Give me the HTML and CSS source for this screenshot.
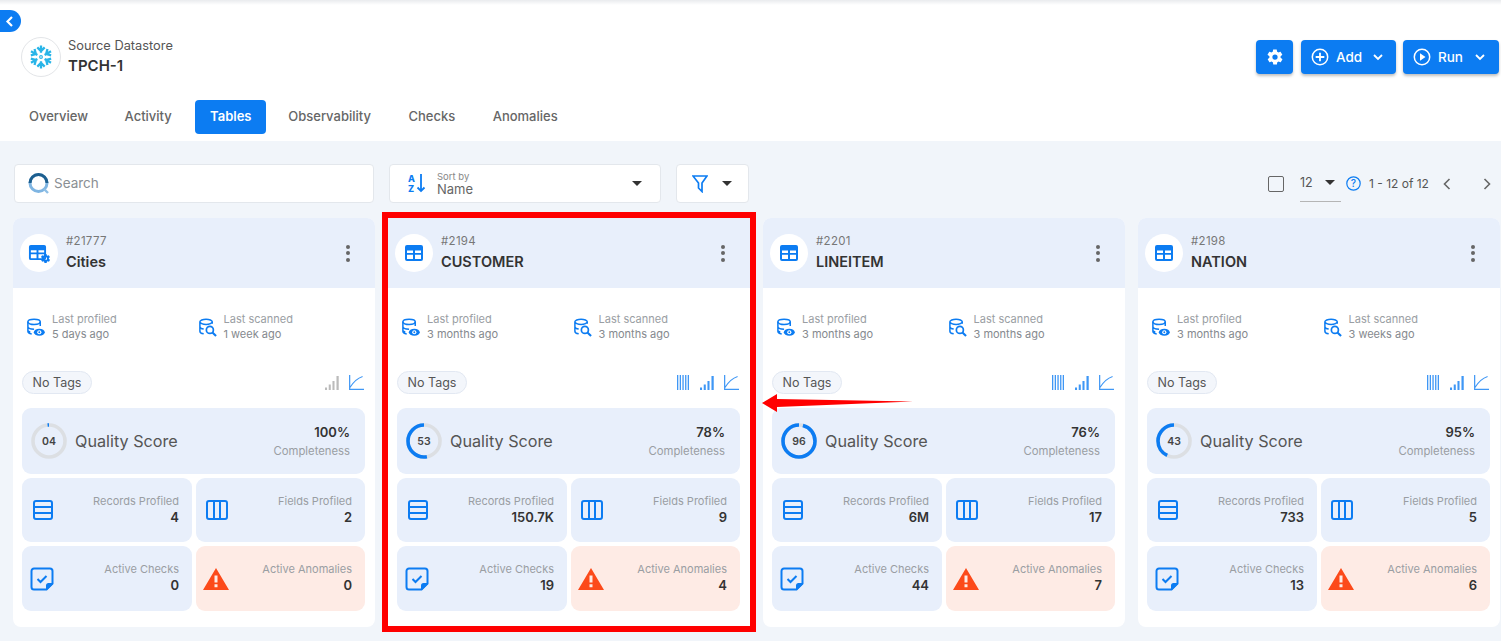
FILE: index.html
```html
<!DOCTYPE html>
<html lang="en">
<head>
  <meta charset="UTF-8">
  <meta name="viewport" content="width=device-width, initial-scale=1.0">
  <title>TPCH-1 Tables</title>
  <link rel="stylesheet" href="styles.css">
</head>
<body>

  <!-- icon sheet -->
  <svg class="sheet" xmlns="http://www.w3.org/2000/svg">
    <symbol id="i-gear" viewBox="0 0 24 24">
      <path fill="currentColor" d="M19.400 13c.1-.3.100-.7.100-1s0-.7-.1-1l2.100-1.600c.2-.2.200-.4.100-.6l-2-3.500c-.1-.2-.4-.3-.6-.2l-2.500 1c-.5-.4-1.100-.7-1.700-1l-.4-2.600c0-.3-.2-.5-.5-.5h-4c-.3 0-.5.200-.5.500l-.4 2.600c-.6.300-1.200.6-1.700 1l-2.500-1c-.2-.1-.5 0-.6.200l-2 3.500c-.1.200-.1.400.1.600L4.600 11c-.1.300-.1.700-.1 1s0 .7.100 1l-2.100 1.600c-.2.200-.2.400-.1.600l2 3.500c.1.200.4.300.6.200l2.500-1c.5.400 1.100.7 1.700 1l.4 2.600c0 .3.200.5.500.5h4c.3 0 .5-.2.500-.5l.4-2.600c.6-.3 1.200-.6 1.700-1l2.500 1c.2.100.5 0 .6-.2l2-3.500c.1-.2.100-.4-.1-.6zM12 15.500a3.500 3.500 0 1 1 0-7 3.500 3.500 0 0 1 0 7z"/>
    </symbol>
    <symbol id="i-table" viewBox="0 0 20 20">
      <path fill="currentColor" fill-rule="evenodd" d="M3 2h14a2 2 0 0 1 2 2v12a2 2 0 0 1-2 2H3a2 2 0 0 1-2-2V4a2 2 0 0 1 2-2zm0 5.600V10h6V7.600zm8 0V10h6V7.600zM3 11.800V16h6v-4.200zm8 0V16h6v-4.200z"/>
    </symbol>
    <symbol id="i-db-eye" viewBox="0 0 20 20">
      <g fill="none" stroke="currentColor" stroke-width="1.600">
        <ellipse cx="8.500" cy="4" rx="6.500" ry="2.800"/>
        <path d="M2 4v10c0 1.600 1.800 2.500 4 2.800M15 4v4.500M2 9c0 1.700 3 2.800 6.500 2.800M2 13.500c.5.600 1.500 1 2.500 1.200"/>
      </g>
      <ellipse cx="14" cy="15" rx="5.800" ry="3.700" fill="currentColor"/>
      <circle cx="14" cy="15" r="2.200" fill="#fff"/>
      <circle cx="14" cy="15" r="1" fill="currentColor"/>
    </symbol>
    <symbol id="i-db-scan" viewBox="0 0 20 20">
      <g fill="none" stroke="currentColor" stroke-width="1.600">
        <path d="M2 4c0-1.500 3-2.800 6.500-2.800S15 2.500 15 4 12 6.800 8.500 6.800 2 5.500 2 4zM2 4v10c0 1.500 1.800 2.400 4 2.700M15 4v2M2 9c0 1.500 1.800 2.400 4 2.700"/>
        <circle cx="12.500" cy="12.500" r="3.700" stroke-width="1.800"/>
        <path d="M15.200 15.200 19 19" stroke-width="2.200"/>
      </g>
    </symbol>
    <symbol id="i-cols" viewBox="0 0 12 15">
      <path fill="currentColor" d="M0 0h1.300v15H0zM2.700 0H4v15H2.700zM5.400 0h1.300v15H5.400zM8.100 0h1.300v15H8.100zM10.700 0H12v15h-1.300z"/>
    </symbol>
    <symbol id="i-signal" viewBox="0 0 15 15" preserveAspectRatio="none">
      <path fill="currentColor" d="M0 12.500h2.200V15H0zM4 9.500h2.200V15H4zM8 6h2.200v9H8zM12.300 1h2.400v14h-2.400z"/>
    </symbol>
    <symbol id="i-chart" viewBox="0 0 16 15" preserveAspectRatio="none">
      <path fill="none" stroke="currentColor" stroke-width="1.300" d="M.7 0v14.300H16M1 12.500C4 8 8 3.500 14.500 1.500"/>
    </symbol>
    <symbol id="i-rows" viewBox="0 0 22 22">
      <rect x="2" y="2" width="18" height="18" rx="2" fill="none" stroke="currentColor" stroke-width="2"/>
      <path stroke="currentColor" stroke-width="2" d="M2 8h18M2 14h18"/>
    </symbol>
    <symbol id="i-fields" viewBox="0 0 22 20">
      <rect x="1" y="1" width="20" height="18" rx="2" fill="none" stroke="currentColor" stroke-width="2"/>
      <path stroke="currentColor" stroke-width="2" d="M8 1v18M14 1v18"/>
    </symbol>
    <symbol id="i-check" viewBox="0 0 24 24">
      <path fill="none" stroke="currentColor" stroke-width="2" d="M4 1.500h16A2.500 2.500 0 0 1 22.500 4v12.500l-6 6H4A2.500 2.500 0 0 1 1.500 20V4A2.500 2.500 0 0 1 4 1.500z"/>
      <path fill="currentColor" d="M23 16v1l-6 6h-1v-4.500a2.500 2.500 0 0 1 2.500-2.500z"/>
      <path fill="none" stroke="currentColor" stroke-width="2" d="m7.500 12 3 3 6-6"/>
    </symbol>
    <symbol id="i-warn" viewBox="0 0 26 22">
      <path fill="#fc4a1a" fill-rule="evenodd" d="M13 0l13 22H0zm-1.500 7.500v7h3v-7zm0 8.700v3h3v-3z"/>
    </symbol>
  </svg>

  <a class="back-tab" href="#">
    <svg width="9" height="11" viewBox="0 0 9 11"><path d="M7 1 2.500 5.500 7 10" fill="none" stroke="#fff" stroke-width="2.200"/></svg>
  </a>

  <header class="top">
    <div class="top-row">
      <div class="store">
        <div class="store-logo">
          <svg width="24" height="24" viewBox="0 0 26 26">
            <g fill="none" stroke="#29b5e8" stroke-width="2.500">
              <g id="arm">
                <path d="M13 8.500V.5M9 2.600 13 6.600l4-4"/>
              </g>
              <use href="#arm" transform="rotate(60 13 13)"/>
              <use href="#arm" transform="rotate(120 13 13)"/>
              <use href="#arm" transform="rotate(180 13 13)"/>
              <use href="#arm" transform="rotate(240 13 13)"/>
              <use href="#arm" transform="rotate(300 13 13)"/>
              <circle cx="13" cy="13" r="1.500" stroke-width="1.200"/>
            </g>
          </svg>
        </div>
        <div>
          <div class="store-kind">Source Datastore</div>
          <div class="store-name">TPCH-1</div>
        </div>
      </div>
      <div class="actions">
        <button class="btn btn-gear">
          <svg width="18" height="18"><use href="#i-gear"/></svg>
        </button>
        <button class="btn btn-add">
          <svg width="18" height="18" viewBox="0 0 18 18"><circle cx="9" cy="9" r="7.700" fill="none" stroke="#fff" stroke-width="1.500"/><path stroke="#fff" stroke-width="1.800" d="M9 4.700v8.600M4.700 9h8.600"/></svg>
          <span>Add</span>
          <svg width="10" height="7" viewBox="0 0 10 7"><path d="m1 1 4 4 4-4" fill="none" stroke="#fff" stroke-width="1.800"/></svg>
        </button>
        <button class="btn btn-run">
          <svg width="18" height="18" viewBox="0 0 18 18"><circle cx="9" cy="9" r="7.700" fill="none" stroke="#fff" stroke-width="1.500"/><path fill="#fff" d="M7 5.300 12.500 9 7 12.700z"/></svg>
          <span>Run</span>
          <svg width="10" height="7" viewBox="0 0 10 7"><path d="m1 1 4 4 4-4" fill="none" stroke="#fff" stroke-width="1.800"/></svg>
        </button>
      </div>
    </div>
    <nav class="tabs">
      <a class="tab" href="#">Overview</a>
      <a class="tab" href="#">Activity</a>
      <a class="tab tab-on" href="#">Tables</a>
      <a class="tab" href="#">Observability</a>
      <a class="tab" href="#">Checks</a>
      <a class="tab" href="#">Anomalies</a>
    </nav>
  </header>

  <main class="main">
    <div class="toolbar">
      <label class="box search">
        <svg width="24" height="24" viewBox="0 0 24 24">
          <circle cx="11.500" cy="11" r="8.500" fill="none" stroke="#7fb5e2" stroke-width="3"/>
          <path d="M3 11a8.500 8.500 0 0 1 17 0" fill="none" stroke="#1d5f8f" stroke-width="3"/>
          <path d="m17 17 4 4" stroke="#8fbfe6" stroke-width="2.400"/>
        </svg>
        <span>Search</span>
      </label>
      <div class="box sort">
        <svg class="sort-icon" width="18" height="19" viewBox="0 0 18 19">
          <text class="sort-az" x="0" y="8">A</text>
          <text class="sort-az" x="0" y="18">Z</text>
          <path d="M13 0v17M9.500 13.500 13 17l3.500-3.500" fill="none" stroke="#0c7cf2" stroke-width="1.800"/>
        </svg>
        <div class="sort-text">
          <div class="sort-small">Sort by</div>
          <div class="sort-val">Name</div>
        </div>
        <i class="caret"></i>
      </div>
      <div class="box filter">
        <svg width="16" height="18" viewBox="0 0 16 18"><path d="M1 1h14L10 8v8.500L6.500 13V8z" fill="none" stroke="#0c7cf2" stroke-width="1.700"/></svg>
        <i class="caret"></i>
      </div>
      <div class="pager">
        <span class="check-box"></span>
        <span class="per-page">12<i class="caret"></i></span>
        <svg class="help" width="15" height="15" viewBox="0 0 15 15"><circle cx="7.500" cy="7.500" r="6.700" fill="none" stroke="#0c7cf2" stroke-width="1.200"/><text x="7.500" y="11" text-anchor="middle" class="help-q">?</text></svg>
        <span class="range">1 - 12 of 12</span>
        <svg class="prev" width="8" height="12" viewBox="0 0 8 12"><path d="M6.500 1 1.500 6l5 5" fill="none" stroke="#666" stroke-width="1.600"/></svg>
        <svg class="next" width="8" height="12" viewBox="0 0 8 12"><path d="m1.500 1 5 5-5 5" fill="none" stroke="#666" stroke-width="1.600"/></svg>
      </div>
    </div>

    <div class="cards">

      <article class="card">
        <div class="card-head">
          <div class="head-icon head-icon-gear">
            <svg class="ico-table-sm"><use href="#i-table"/></svg>
            <svg class="ico-gear-sm"><use href="#i-gear"/></svg>
          </div>
          <div class="head-text">
            <div class="card-id">#21777</div>
            <div class="card-name">Cities</div>
          </div>
          <span class="dots"><i></i><i></i><i></i></span>
        </div>
        <div class="times">
          <div class="time"><svg class="ico18"><use href="#i-db-eye"/></svg><div><div>Last profiled</div><div class="time-val">5 days ago</div></div></div>
          <div class="time"><svg class="ico18"><use href="#i-db-scan"/></svg><div><div>Last scanned</div><div class="time-val">1 week ago</div></div></div>
        </div>
        <div class="tag-row">
          <span class="pill">No Tags</span>
          <div class="mini">
            <svg class="m-signal off"><use href="#i-signal"/></svg>
            <svg class="m-chart"><use href="#i-chart"/></svg>
          </div>
        </div>
        <div class="score">
          <div class="ring">
            <svg width="36" height="36" viewBox="0 0 36 36"><circle class="ring-bg" cx="18" cy="18" r="16"/><circle class="ring-on" cx="18" cy="18" r="16" pathLength="100" stroke-dasharray="1.500 100"/></svg>
            <span>04</span>
          </div>
          <div class="score-name">Quality Score</div>
          <div class="score-right"><b>100%</b><div>Completeness</div></div>
        </div>
        <div class="stats">
          <div class="stat"><svg class="s-rows"><use href="#i-rows"/></svg><div class="stat-text">Records Profiled<b>4</b></div></div>
          <div class="stat"><svg class="s-fields"><use href="#i-fields"/></svg><div class="stat-text">Fields Profiled<b>2</b></div></div>
          <div class="stat stat-low"><svg class="s-check"><use href="#i-check"/></svg><div class="stat-text">Active Checks<b>0</b></div></div>
          <div class="stat stat-low stat-red"><svg class="s-warn"><use href="#i-warn"/></svg><div class="stat-text">Active Anomalies<b>0</b></div></div>
        </div>
      </article>

      <article class="card card-marked">
        <div class="card-head">
          <div class="head-icon"><svg class="ico20"><use href="#i-table"/></svg></div>
          <div class="head-text">
            <div class="card-id">#2194</div>
            <div class="card-name">CUSTOMER</div>
          </div>
          <span class="dots"><i></i><i></i><i></i></span>
        </div>
        <div class="times">
          <div class="time"><svg class="ico18"><use href="#i-db-eye"/></svg><div><div>Last profiled</div><div class="time-val">3 months ago</div></div></div>
          <div class="time"><svg class="ico18"><use href="#i-db-scan"/></svg><div><div>Last scanned</div><div class="time-val">3 months ago</div></div></div>
        </div>
        <div class="tag-row">
          <span class="pill">No Tags</span>
          <div class="mini">
            <svg class="m-cols"><use href="#i-cols"/></svg>
            <svg class="m-signal"><use href="#i-signal"/></svg>
            <svg class="m-chart"><use href="#i-chart"/></svg>
          </div>
        </div>
        <div class="score">
          <div class="ring">
            <svg width="36" height="36" viewBox="0 0 36 36"><circle class="ring-bg" cx="18" cy="18" r="16"/><circle class="ring-on" cx="18" cy="18" r="16" pathLength="100" stroke-dasharray="53 100"/></svg>
            <span>53</span>
          </div>
          <div class="score-name">Quality Score</div>
          <div class="score-right"><b>78%</b><div>Completeness</div></div>
        </div>
        <div class="stats">
          <div class="stat"><svg class="s-rows"><use href="#i-rows"/></svg><div class="stat-text">Records Profiled<b>150.7K</b></div></div>
          <div class="stat"><svg class="s-fields"><use href="#i-fields"/></svg><div class="stat-text">Fields Profiled<b>9</b></div></div>
          <div class="stat stat-low"><svg class="s-check"><use href="#i-check"/></svg><div class="stat-text">Active Checks<b>19</b></div></div>
          <div class="stat stat-low stat-red"><svg class="s-warn"><use href="#i-warn"/></svg><div class="stat-text">Active Anomalies<b>4</b></div></div>
        </div>
      </article>

      <article class="card">
        <div class="card-head">
          <div class="head-icon"><svg class="ico20"><use href="#i-table"/></svg></div>
          <div class="head-text">
            <div class="card-id">#2201</div>
            <div class="card-name">LINEITEM</div>
          </div>
          <span class="dots"><i></i><i></i><i></i></span>
        </div>
        <div class="times">
          <div class="time"><svg class="ico18"><use href="#i-db-eye"/></svg><div><div>Last profiled</div><div class="time-val">3 months ago</div></div></div>
          <div class="time"><svg class="ico18"><use href="#i-db-scan"/></svg><div><div>Last scanned</div><div class="time-val">3 months ago</div></div></div>
        </div>
        <div class="tag-row">
          <span class="pill">No Tags</span>
          <div class="mini">
            <svg class="m-cols"><use href="#i-cols"/></svg>
            <svg class="m-signal"><use href="#i-signal"/></svg>
            <svg class="m-chart"><use href="#i-chart"/></svg>
          </div>
        </div>
        <div class="score">
          <div class="ring">
            <svg width="36" height="36" viewBox="0 0 36 36"><circle class="ring-bg" cx="18" cy="18" r="16"/><circle class="ring-on" cx="18" cy="18" r="16" pathLength="100" stroke-dasharray="96 100"/></svg>
            <span>96</span>
          </div>
          <div class="score-name">Quality Score</div>
          <div class="score-right"><b>76%</b><div>Completeness</div></div>
        </div>
        <div class="stats">
          <div class="stat"><svg class="s-rows"><use href="#i-rows"/></svg><div class="stat-text">Records Profiled<b>6M</b></div></div>
          <div class="stat"><svg class="s-fields"><use href="#i-fields"/></svg><div class="stat-text">Fields Profiled<b>17</b></div></div>
          <div class="stat stat-low"><svg class="s-check"><use href="#i-check"/></svg><div class="stat-text">Active Checks<b>44</b></div></div>
          <div class="stat stat-low stat-red"><svg class="s-warn"><use href="#i-warn"/></svg><div class="stat-text">Active Anomalies<b>7</b></div></div>
        </div>
      </article>

      <article class="card">
        <div class="card-head">
          <div class="head-icon"><svg class="ico20"><use href="#i-table"/></svg></div>
          <div class="head-text">
            <div class="card-id">#2198</div>
            <div class="card-name">NATION</div>
          </div>
          <span class="dots"><i></i><i></i><i></i></span>
        </div>
        <div class="times">
          <div class="time"><svg class="ico18"><use href="#i-db-eye"/></svg><div><div>Last profiled</div><div class="time-val">3 months ago</div></div></div>
          <div class="time"><svg class="ico18"><use href="#i-db-scan"/></svg><div><div>Last scanned</div><div class="time-val">3 weeks ago</div></div></div>
        </div>
        <div class="tag-row">
          <span class="pill">No Tags</span>
          <div class="mini">
            <svg class="m-cols"><use href="#i-cols"/></svg>
            <svg class="m-signal"><use href="#i-signal"/></svg>
            <svg class="m-chart"><use href="#i-chart"/></svg>
          </div>
        </div>
        <div class="score">
          <div class="ring">
            <svg width="36" height="36" viewBox="0 0 36 36"><circle class="ring-bg" cx="18" cy="18" r="16"/><circle class="ring-on" cx="18" cy="18" r="16" pathLength="100" stroke-dasharray="43 100"/></svg>
            <span>43</span>
          </div>
          <div class="score-name">Quality Score</div>
          <div class="score-right"><b>95%</b><div>Completeness</div></div>
        </div>
        <div class="stats">
          <div class="stat"><svg class="s-rows"><use href="#i-rows"/></svg><div class="stat-text">Records Profiled<b>733</b></div></div>
          <div class="stat"><svg class="s-fields"><use href="#i-fields"/></svg><div class="stat-text">Fields Profiled<b>5</b></div></div>
          <div class="stat stat-low"><svg class="s-check"><use href="#i-check"/></svg><div class="stat-text">Active Checks<b>13</b></div></div>
          <div class="stat stat-low stat-red"><svg class="s-warn"><use href="#i-warn"/></svg><div class="stat-text">Active Anomalies<b>6</b></div></div>
        </div>
      </article>

    </div>
  </main>

  <!-- red annotation arrow -->
  <svg class="arrow" width="152" height="20" viewBox="0 0 152 20"><path fill="#f00" d="M0 10 15 1v5L151 8.500 15 14v5z"/></svg>

</body>
</html>
```

FILE: styles.css
```css
/* Page */
* {
  box-sizing: border-box;
}
html, body {
  height: 100%;
}
body {
  margin: 0;
  font-family: Inter, "Noto Sans", Arial, sans-serif;
  background-color: #f1f5fa;
  color: #333;
  overflow: hidden;
  position: relative;
}
.sheet {
  display: none;
}
a {
  color: inherit;
  text-decoration: none;
}
svg {
  display: block;
  flex: none;
}

/* Header */
.top {
  height: 141px;
  padding: 37px 2px 0 21px;
  background: linear-gradient(#e9ebee, #fff 5px), #fff;
}
.top-row {
  display: flex;
  justify-content: space-between;
  height: 63px;
}
.back-tab {
  position: absolute;
  left: 0;
  top: 10px;
  width: 21px;
  height: 22px;
  background-color: #0c7cf2;
  border-radius: 0 11px 11px 0;
  display: flex;
  align-items: center;
  justify-content: center;
  padding-right: 2px;
}
.store {
  display: flex;
  gap: 7px;
  height: 40px;
  align-items: center;
}
.store-logo {
  width: 40px;
  height: 40px;
  border: 1px solid #e3e5e8;
  border-radius: 50%;
  display: flex;
  align-items: center;
  justify-content: center;
}
.store-kind {
  font-size: 12.800px;
  line-height: 18px;
  color: #555;
}
.store-name {
  font-size: 15px;
  line-height: 22px;
  font-weight: 600;
}
.actions {
  display: flex;
  gap: 8px;
  padding-top: 3px;
}
.btn {
  height: 34px;
  background-color: #0c7cf2;
  border: none;
  border-radius: 4px;
  color: #fff;
  font: 500 13.500px Inter, sans-serif;
  display: flex;
  align-items: center;
  box-shadow: 0 2px 3px rgba(0, 0, 0, .25);
}
.btn-gear {
  width: 37px;
  justify-content: center;
}
.btn-add {
  width: 95px;
  gap: 7px;
  padding: 0 0 0 10px;
}
.btn-run {
  width: 96px;
  gap: 7px;
  padding: 0 0 0 10px;
  margin-left: -1px;
}
.btn span {
  width: 25px;
  margin-right: 5px;
  text-align: left;
}
.tabs {
  display: flex;
}
.tab {
  height: 34px;
  padding: 0 8px;
  margin-right: 21.500px;
  font-size: 13px;
  line-height: 33px;
  font-weight: 500;
  color: #666;
}
.tab:first-child {
  margin-right: 20.500px;
}
.tab-on {
  width: 71px;
  padding: 0;
  margin-right: 14px;
  margin-left: -6px;
  text-align: center;
  background-color: #0c7cf2;
  border-radius: 4px;
  color: #fff;
  font-weight: 600;
}

/* Toolbar */
.main {
  padding: 23px 0 0 13px;
}
.toolbar {
  display: flex;
  height: 54px;
  padding-left: 1px;
}
.box {
  height: 39px;
  background-color: #fff;
  border: 1px solid #e3e7ec;
  border-radius: 4px;
  display: flex;
  align-items: center;
}
.search {
  width: 360px;
  padding-left: 12px;
  gap: 3px;
  font-size: 13.500px;
  line-height: 15px;
  color: #8a8f94;
}
.search span {
  margin-bottom: 1px;
}
.sort {
  width: 272px;
  margin-left: 15px;
  padding: 0 18px;
  gap: 10px;
}
.sort-az {
  font: 800 9px Inter, sans-serif;
  fill: #0c7cf2;
}
.sort-text {
  flex: 1;
  margin: 0 0 0 1px;
}
.sort-small {
  font-size: 9.500px;
  line-height: 11px;
  color: #888;
}
.sort-val {
  font-size: 13px;
  line-height: 15px;
  color: #666;
}
.caret {
  display: inline-block;
  width: 0;
  height: 0;
  border: 5px solid transparent;
  border-top-color: #333;
  border-bottom-width: 0;
}
.filter {
  width: 73px;
  margin-left: 15px;
  padding-left: 15px;
  gap: 14px;
}
.pager {
  margin-left: auto;
  display: flex;
  align-items: center;
  height: 39px;
  font-size: 12.500px;
  color: #555;
}
.check-box {
  width: 16px;
  height: 16px;
  border: 1.500px solid #666;
  border-radius: 2px;
}
.per-page {
  width: 41px;
  height: 38px;
  margin-left: 16px;
  display: flex;
  align-items: center;
  justify-content: space-between;
  border-bottom: 1px solid #b5b5b5;
  padding-right: 6px;
  margin-top: -1px;
  color: #555;
}
.help {
  margin-left: 5px;
}
.help-q {
  font: 500 10px Inter, sans-serif;
  fill: #0c7cf2;
}
.range {
  margin-left: 8px;
  width: 59px;
  white-space: nowrap;
  font-size: 12px;
}
.prev {
  margin-left: 15px;
}
.next {
  margin: 0 10px 0 32px;
}

/* Cards */
.cards {
  display: grid;
  grid-template-columns: repeat(4, 362px);
  gap: 13px;
  align-items: start;
}
.card {
  height: 409px;
  background-color: #fff;
  border-radius: 8px;
  overflow: hidden;
}
.card-marked {
  height: 408px;
  border-radius: 0;
  overflow: visible;
  outline: 6px solid #f00;
}
.card-head {
  height: 70px;
  background-color: #e8effb;
  padding: 0 25px 0 7px;
  display: flex;
  align-items: center;
}
.head-icon {
  width: 38px;
  height: 38px;
  background-color: #fff;
  border-radius: 50%;
  color: #0c7cf2;
  display: flex;
  align-items: center;
  justify-content: center;
}
.head-icon-gear {
  position: relative;
}
.ico-table-sm {
  width: 19px;
  height: 19px;
  margin: -2px 4px 0 0;
}
.ico-gear-sm {
  position: absolute;
  right: 7px;
  bottom: 8px;
  width: 11px;
  height: 11px;
}
.ico20 {
  width: 20px;
  height: 20px;
}
.head-text {
  margin-left: 8px;
  padding-top: 1px;
  flex: 1;
}
.card-id {
  font-size: 11.500px;
  line-height: 16px;
  margin-bottom: 1px;
  color: #777;
  letter-spacing: .3px;
}
.card-name {
  font-size: 14.500px;
  line-height: 24px;
  font-weight: 600;
}
.dots {
  display: flex;
  flex-direction: column;
  gap: 2.500px;
}
.dots i {
  width: 4px;
  height: 4px;
  border-radius: 50%;
  background-color: #666;
}
.times {
  display: grid;
  grid-template-columns: 171.500px 1fr;
  padding: 23px 0 0 13px;
  height: 83px;
  font-size: 11px;
  line-height: 15px;
  color: #9a9ea3;
}
.time {
  display: flex;
  align-items: center;
  height: 32px;
  gap: 7px;
  color: #9a9ea3;
}
.time-val {
  color: #85898e;
}
.ico18 {
  width: 19px;
  height: 19px;
  color: #0c7cf2;
}
.tag-row {
  display: flex;
  justify-content: space-between;
  align-items: center;
  height: 23px;
  padding: 0 11px 0 9px;
  margin-bottom: 14px;
}
.pill {
  width: 70px;
  height: 23px;
  border: 1px solid #e2e8f2;
  background-color: #f3f6fb;
  border-radius: 12px;
  font-size: 12.500px;
  line-height: 21px;
  text-align: center;
  color: #555;
}
.mini {
  display: flex;
  align-items: center;
  color: #3f97f5;
}
.mini svg {
  height: 15px;
}
.m-cols {
  width: 12px;
  margin-right: 11px;
}
.m-signal {
  width: 14px;
  margin-right: 10px;
}
.m-signal.off {
  color: #bbb;
}
.m-chart {
  width: 15px;
}

/* Score and stats */
.score {
  height: 66px;
  margin: 0 10px 0 9px;
  background-color: #e8effb;
  border-radius: 9px;
  display: flex;
  align-items: center;
  padding: 0 15px 0 9px;
}
.ring {
  position: relative;
  width: 36px;
  height: 36px;
  font-size: 10.500px;
  font-weight: 600;
  color: #444;
}
.ring svg {
  transform: rotate(-90deg) scaleY(-1);
}
.ring circle {
  fill: none;
  stroke-width: 3.600;
}
.ring-bg {
  stroke: #dcdfe3;
}
.ring-on {
  stroke: #0c7cf2;
}
.ring span {
  position: absolute;
  inset: 0;
  display: flex;
  align-items: center;
  justify-content: center;
}
.score-name {
  flex: 1;
  margin-left: 8px;
  font-size: 16.200px;
  color: #555;
}
.score-right {
  text-align: right;
  font-size: 11.300px;
  line-height: 18px;
  color: #9a9ea3;
}
.score-right b {
  display: block;
  line-height: 19px;
  font-size: 13px;
  font-weight: 600;
  color: #333;
}
.stats {
  display: grid;
  grid-template-columns: 170px 169px;
  grid-auto-rows: 64px;
  gap: 4px;
  margin: 4px 10px 0 9px;
}
.stat {
  background-color: #e8effb;
  border-radius: 9px;
  display: flex;
  align-items: center;
  justify-content: space-between;
  padding: 0 13px 0 10px;
  color: #0c7cf2;
}
.stat-low {
  height: 65px;
  padding-left: 8px;
}
.stat-red {
  background-color: #feebe5;
  padding-left: 7px;
}
.stat-text {
  margin-bottom: 2px;
  text-align: right;
  font-size: 11px;
  line-height: 16px;
  color: #9a9ea3;
}
.stat-text b {
  display: block;
  font-size: 13px;
  line-height: 17px;
  font-weight: 600;
  color: #333;
}
.s-rows {
  width: 22px;
  height: 22px;
}
.s-fields {
  width: 22px;
  height: 20px;
}
.s-check {
  width: 24px;
  height: 24px;
}
.s-warn {
  width: 26px;
  height: 22px;
}

/* Annotation */
.arrow {
  position: absolute;
  left: 762px;
  top: 393px;
}
```
